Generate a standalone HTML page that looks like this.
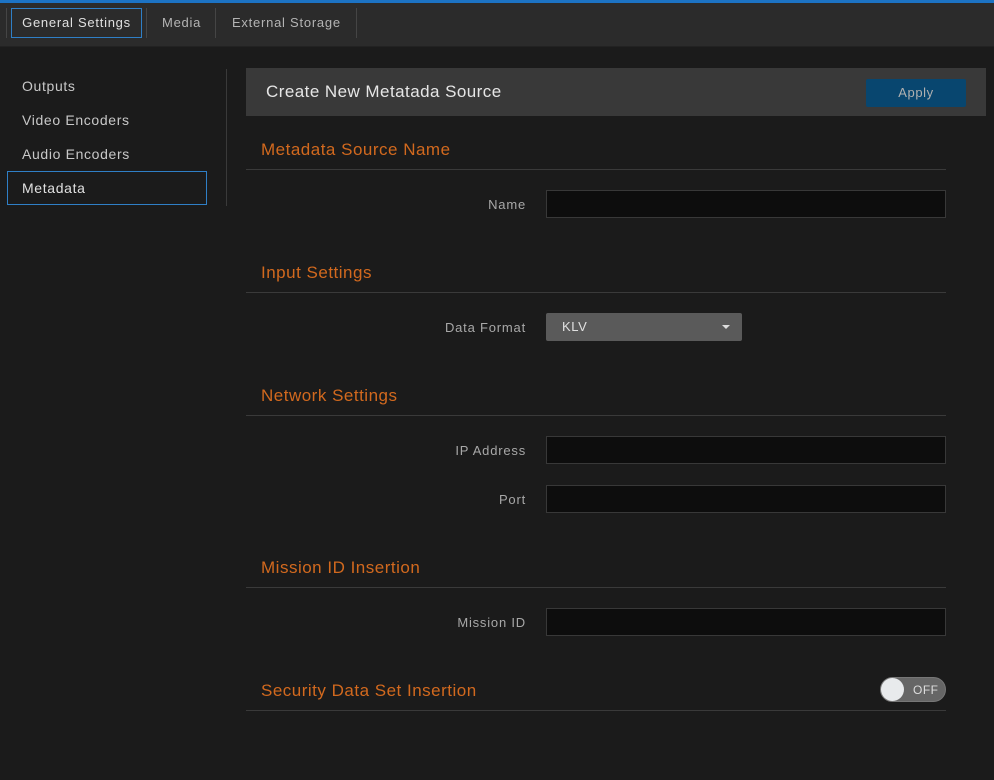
<!DOCTYPE html>
<html><head><style>
*{margin:0;padding:0;box-sizing:border-box}
body{width:994px;height:780px;background:#1b1b1b;font-family:"Liberation Sans",sans-serif;position:relative;overflow:hidden}
.a{position:absolute}
.topb{left:0;top:0;width:994px;height:3px;background:#1c73c4}
.nav{left:0;top:3px;width:994px;height:44px;background:#2b2b2b;border-bottom:1px solid #222}
.sep{width:1px;height:30px;top:8px;background:#454545}
.tab{top:8px;height:30px;line-height:30px;font-size:13px;color:#b4b4b4;letter-spacing:0.75px}
.side{left:22px;font-size:14px;color:#c8c8c8;letter-spacing:0.65px}
.st{left:261px;font-size:17px;color:#d2691e;letter-spacing:0.5px}
.ln{left:246px;width:700px;height:1px;background:#3a3a3a}
.lb{width:280px;left:246px;text-align:right;font-size:13px;color:#a8a8a8;letter-spacing:0.8px}
.in{left:546px;width:400px;height:28px;background:#0d0d0d;border:1px solid #383838}
</style></head><body>
<div class="a topb"></div>
<div class="a nav"></div>
<div class="a sep" style="left:6px"></div>
<div class="a tab" style="left:11px;width:131px;border:1px solid #2f7fc6;text-align:center;color:#e0e0e0;line-height:28px">General Settings</div>
<div class="a sep" style="left:146px"></div>
<div class="a tab" style="left:162px">Media</div>
<div class="a sep" style="left:215px"></div>
<div class="a tab" style="left:232px">External Storage</div>
<div class="a sep" style="left:356px"></div>

<div class="a side" style="top:78px">Outputs</div>
<div class="a side" style="top:112px">Video Encoders</div>
<div class="a side" style="top:146px">Audio Encoders</div>
<div class="a" style="left:7px;top:171px;width:200px;height:34px;border:1px solid #2f7fc6"></div>
<div class="a side" style="top:180px;color:#e0e0e0">Metadata</div>
<div class="a" style="left:226px;top:69px;width:1px;height:137px;background:#3a3a3a"></div>

<div class="a" style="left:246px;top:68px;width:740px;height:48px;background:#393939"></div>
<div class="a" style="left:266px;top:82px;font-size:17px;color:#e6e6e6;letter-spacing:0.45px">Create New Metatada Source</div>
<div class="a" style="left:866px;top:79px;width:100px;height:28px;background:#08466f;border-radius:2px;color:#b0b0b0;font-size:13px;text-align:center;line-height:28px;letter-spacing:0.6px">Apply</div>

<div class="a st" style="top:140px">Metadata Source Name</div>
<div class="a ln" style="top:169px"></div>
<div class="a lb" style="top:197px">Name</div>
<div class="a in" style="top:190px"></div>

<div class="a st" style="top:263px">Input Settings</div>
<div class="a ln" style="top:292px"></div>
<div class="a lb" style="top:320px">Data Format</div>
<div class="a" style="left:546px;top:313px;width:196px;height:28px;background:#5a5a5a;border-radius:2px;color:#e0e0e0;font-size:13px;line-height:28px;padding-left:16px;letter-spacing:0.6px">KLV</div>
<div class="a" style="left:722px;top:325px;width:0;height:0;border-left:4px solid transparent;border-right:4px solid transparent;border-top:4px solid #ddd"></div>

<div class="a st" style="top:386px">Network Settings</div>
<div class="a ln" style="top:415px"></div>
<div class="a lb" style="top:443px">IP Address</div>
<div class="a in" style="top:436px"></div>
<div class="a lb" style="top:492px">Port</div>
<div class="a in" style="top:485px"></div>

<div class="a st" style="top:558px">Mission ID Insertion</div>
<div class="a ln" style="top:587px"></div>
<div class="a lb" style="top:615px">Mission ID</div>
<div class="a in" style="top:608px"></div>

<div class="a st" style="top:681px">Security Data Set Insertion</div>
<div class="a ln" style="top:710px"></div>
<div class="a" style="left:880px;top:677px;width:66px;height:25px;border-radius:13px;background:#666;border:1px solid #777"></div>
<div class="a" style="left:881px;top:678px;width:23px;height:23px;border-radius:50%;background:#e8eaec"></div>
<div class="a" style="left:913px;top:683px;font-size:12px;color:#ddd;letter-spacing:0.5px">OFF</div>
</body></html>
